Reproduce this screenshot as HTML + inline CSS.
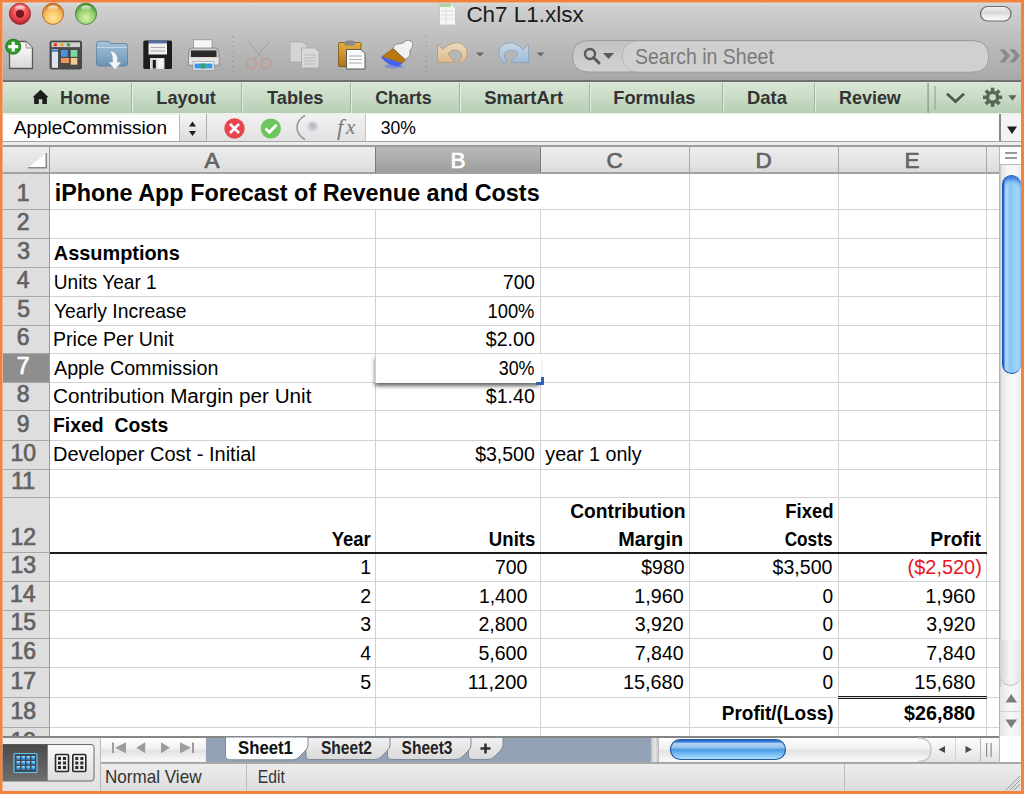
<!DOCTYPE html>
<html><head><meta charset="utf-8">
<style>
*{box-sizing:border-box}
html,body{margin:0;padding:0}
body{width:1024px;height:794px;overflow:hidden;position:relative;background:#f5813f;font-family:"Liberation Sans",sans-serif}
.a{position:absolute}
svg{position:absolute;left:0;top:0}
text{font-family:"Liberation Sans",sans-serif;white-space:pre}
</style></head><body>
<!-- window base -->
<div class="a" style="left:2px;top:2px;width:1019px;height:789px;background:#eab08e"></div>
<div class="a" style="left:3px;top:3px;width:1018px;height:788px;background:#dcdcdc"></div>
<!-- unified title/toolbar -->
<div class="a" style="left:3px;top:3px;width:1018px;height:77px;background:linear-gradient(#d8dadc 0px,#d0d0d0 3px,#c6c6c6 22px,#b9b9b9 45px,#a8a8a8 77px)"></div>
<div class="a" style="left:3px;top:80px;width:1018px;height:2px;background:#6f6f6f"></div>
<!-- ribbon -->
<div class="a" style="left:3px;top:82px;width:1018px;height:31px;background:linear-gradient(#dae7d7,#c9dcc6 50%,#b6cdb3)"></div>
<!-- formula bar -->
<div class="a" style="left:3px;top:113px;width:1018px;height:28px;background:linear-gradient(#f2f2f2,#e2e2e2)"></div>
<div class="a" style="left:3px;top:113px;width:1018px;height:3px;background:#eef0ee"></div>
<div class="a" style="left:3px;top:115px;width:176px;height:26px;background:#fff"></div>
<div class="a" style="left:179px;top:114px;width:28px;height:27px;background:linear-gradient(#f4f4f4,#dcdcdc);border-left:1px solid #b8b8b8;border-right:1px solid #b0b0b0"></div>
<div class="a" style="left:365px;top:114px;width:635px;height:27px;background:#fff;border-left:1px solid #c4c4c4"></div>
<div class="a" style="left:999px;top:114px;width:2px;height:27px;background:#8a8a8a"></div>
<div class="a" style="left:1001px;top:116px;width:20px;height:25px;background:#f3f3f3"></div>
<div class="a" style="left:3px;top:141px;width:1018px;height:1px;background:#a4a4a4"></div>
<div class="a" style="left:3px;top:142px;width:1018px;height:3px;background:#ededed"></div>
<div class="a" style="left:3px;top:145px;width:1018px;height:2px;background:#9c9c9c"></div>
<!-- column headers -->
<div class="a" style="left:3px;top:147px;width:997px;height:26px;background:linear-gradient(#ececec,#e4e4e4 60%,#d9d9d9)"></div>
<div class="a" style="left:376px;top:147px;width:164px;height:26px;background:linear-gradient(#b9b9b9,#a9a9a9 60%,#9b9b9b)"></div>
<div class="a" style="left:3px;top:172px;width:997px;height:2px;background:#a2a2a2"></div>
<!-- row headers -->
<div class="a" style="left:3px;top:174px;width:46px;height:562px;background:#dedede"></div>
<div class="a" style="left:3px;top:354px;width:46px;height:28px;background:#8e8e8e"></div>
<div class="a" style="left:49px;top:147px;width:1px;height:589px;background:#9a9a9a"></div>
<!-- grid area -->
<div class="a" style="left:50px;top:174px;width:950px;height:562px;background:#fff"></div>
<div class="a" style="left:50px;top:209px;width:950px;height:1px;background:#d2d2d2"></div>
<div class="a" style="left:50px;top:238px;width:950px;height:1px;background:#d2d2d2"></div>
<div class="a" style="left:50px;top:267px;width:950px;height:1px;background:#d2d2d2"></div>
<div class="a" style="left:50px;top:296px;width:950px;height:1px;background:#d2d2d2"></div>
<div class="a" style="left:50px;top:325px;width:950px;height:1px;background:#d2d2d2"></div>
<div class="a" style="left:50px;top:353px;width:950px;height:1px;background:#d2d2d2"></div>
<div class="a" style="left:50px;top:382px;width:950px;height:1px;background:#d2d2d2"></div>
<div class="a" style="left:50px;top:410px;width:950px;height:1px;background:#d2d2d2"></div>
<div class="a" style="left:50px;top:440px;width:950px;height:1px;background:#d2d2d2"></div>
<div class="a" style="left:50px;top:469px;width:950px;height:1px;background:#d2d2d2"></div>
<div class="a" style="left:50px;top:497px;width:950px;height:1px;background:#d2d2d2"></div>
<div class="a" style="left:50px;top:581px;width:950px;height:1px;background:#d2d2d2"></div>
<div class="a" style="left:50px;top:610px;width:950px;height:1px;background:#d2d2d2"></div>
<div class="a" style="left:50px;top:638px;width:950px;height:1px;background:#d2d2d2"></div>
<div class="a" style="left:50px;top:667px;width:950px;height:1px;background:#d2d2d2"></div>
<div class="a" style="left:50px;top:697px;width:950px;height:1px;background:#d2d2d2"></div>
<div class="a" style="left:50px;top:727px;width:950px;height:1px;background:#d2d2d2"></div>
<div class="a" style="left:3px;top:209px;width:46px;height:1px;background:#a8a8a8"></div>
<div class="a" style="left:3px;top:238px;width:46px;height:1px;background:#a8a8a8"></div>
<div class="a" style="left:3px;top:267px;width:46px;height:1px;background:#a8a8a8"></div>
<div class="a" style="left:3px;top:296px;width:46px;height:1px;background:#a8a8a8"></div>
<div class="a" style="left:3px;top:325px;width:46px;height:1px;background:#a8a8a8"></div>
<div class="a" style="left:3px;top:353px;width:46px;height:1px;background:#a8a8a8"></div>
<div class="a" style="left:3px;top:382px;width:46px;height:1px;background:#a8a8a8"></div>
<div class="a" style="left:3px;top:410px;width:46px;height:1px;background:#a8a8a8"></div>
<div class="a" style="left:3px;top:440px;width:46px;height:1px;background:#a8a8a8"></div>
<div class="a" style="left:3px;top:469px;width:46px;height:1px;background:#a8a8a8"></div>
<div class="a" style="left:3px;top:497px;width:46px;height:1px;background:#a8a8a8"></div>
<div class="a" style="left:3px;top:552px;width:46px;height:1px;background:#a8a8a8"></div>
<div class="a" style="left:3px;top:581px;width:46px;height:1px;background:#a8a8a8"></div>
<div class="a" style="left:3px;top:610px;width:46px;height:1px;background:#a8a8a8"></div>
<div class="a" style="left:3px;top:638px;width:46px;height:1px;background:#a8a8a8"></div>
<div class="a" style="left:3px;top:667px;width:46px;height:1px;background:#a8a8a8"></div>
<div class="a" style="left:3px;top:697px;width:46px;height:1px;background:#a8a8a8"></div>
<div class="a" style="left:3px;top:727px;width:46px;height:1px;background:#a8a8a8"></div>
<div class="a" style="left:375px;top:210px;width:1px;height:526px;background:#d2d2d2"></div>
<div class="a" style="left:375px;top:147px;width:1px;height:26px;background:#7a7a7a"></div>
<div class="a" style="left:540px;top:210px;width:1px;height:526px;background:#d2d2d2"></div>
<div class="a" style="left:540px;top:147px;width:1px;height:26px;background:#7a7a7a"></div>
<div class="a" style="left:689px;top:174px;width:1px;height:562px;background:#d2d2d2"></div>
<div class="a" style="left:689px;top:147px;width:1px;height:26px;background:#a8a8a8"></div>
<div class="a" style="left:838px;top:174px;width:1px;height:562px;background:#d2d2d2"></div>
<div class="a" style="left:838px;top:147px;width:1px;height:26px;background:#a8a8a8"></div>
<div class="a" style="left:986px;top:174px;width:1px;height:562px;background:#d2d2d2"></div>
<div class="a" style="left:986px;top:147px;width:1px;height:26px;background:#a8a8a8"></div>
<div class="a" style="left:50px;top:552px;width:937px;height:2px;background:#1c1c1c"></div>
<div class="a" style="left:838px;top:696px;width:149px;height:1px;background:#1c1c1c"></div>
<div class="a" style="left:838px;top:698px;width:149px;height:1px;background:#1c1c1c"></div>
<!-- selected cell -->
<div class="a" style="left:375px;top:353px;width:166px;height:30px;background:#fff;border-top:1px solid #d8d8d8;border-left:1px solid #d0d0d0;box-shadow:-1px 4px 4px -1px rgba(0,0,0,0.6)"></div>
<div class="a" style="left:536px;top:377px;width:8px;height:8px;border-right:3px solid #2f62b8;border-bottom:3px solid #2f62b8"></div>
<!-- vertical scrollbar -->
<div class="a" style="left:999px;top:147px;width:22px;height:590px;background:linear-gradient(90deg,#b4b4b4 0px,#b4b4b4 1px,#e2e2e2 2px,#f4f4f4 8px,#f8f8f8 16px,#ececec)"></div>
<div class="a" style="left:1000px;top:147px;width:21px;height:18px;background:#fff;border-bottom:1px solid #bdbdbd"></div>
<div class="a" style="left:1005px;top:152px;width:12px;height:2px;background:#9a9a9a"></div>
<div class="a" style="left:1005px;top:157px;width:12px;height:2px;background:#9a9a9a"></div>
<div class="a" style="left:1002px;top:175px;width:19px;height:199px;border-radius:10px;background:linear-gradient(90deg,#1f5fc8 0px,#2a6ed6 1px,#b4d8f6 2px,#a6d2f4 5px,#86c2f2 7px,#9ad0f6 12px,#b0dcfa 100%);border:1px solid #1a58c0;border-right:none;box-shadow:inset 0 4px 4px -1px #2a6ed6"></div>
<div class="a" style="left:1000px;top:640px;width:21px;height:46px;border-radius:0 0 11px 11px;background:linear-gradient(90deg,#d4d4d4,#f6f6f6 50%,#e4e4e4);border-bottom:1px solid #bdbdbd"></div>
<div class="a" style="left:1000px;top:687px;width:21px;height:49px;background:linear-gradient(90deg,#e4e4e4,#f8f8f8 50%,#ececec)"></div>
<div class="a" style="left:1000px;top:711px;width:21px;height:1px;background:#d4d4d4"></div>
<!-- bottom tab bar -->
<div class="a" style="left:3px;top:736px;width:1018px;height:2px;background:#858585"></div>
<div class="a" style="left:3px;top:738px;width:97px;height:53px;background:linear-gradient(#eeeeee,#e2e2e2)"></div>
<div class="a" style="left:100px;top:738px;width:1px;height:53px;background:#b9b9b9"></div>
<div class="a" style="left:101px;top:738px;width:105px;height:24px;background:linear-gradient(#f4f4f4,#e8e8e8 50%,#d9d9d9)"></div>
<div class="a" style="left:206px;top:738px;width:794px;height:24px;background:#93a3b5"></div>
<div class="a" style="left:651px;top:738px;width:349px;height:24px;background:linear-gradient(#fdfdfd,#f0f0f0 50%,#e2e2e2)"></div>
<div class="a" style="left:651px;top:738px;width:8px;height:24px;background:linear-gradient(90deg,#c4c4c4,#e8e8e8,#b8b8b8)"></div>
<div class="a" style="left:1000px;top:736px;width:21px;height:26px;background:#fff"></div>
<div class="a" style="left:101px;top:762px;width:920px;height:2px;background:#a9a9a9"></div>
<div class="a" style="left:101px;top:764px;width:920px;height:27px;background:linear-gradient(#ececec,#e4e4e4 60%,#dbdbdb)"></div>
<div class="a" style="left:246px;top:764px;width:1px;height:27px;background:#bdbdbd"></div>
<div class="a" style="left:844px;top:764px;width:1px;height:27px;background:#bdbdbd"></div>
<svg width="1024" height="794" viewBox="0 0 1024 794">
<defs><clipPath id="clipR19"><rect x="3" y="728" width="46" height="8"/></clipPath></defs>
<defs>
  <radialGradient id="gRed" cx="50%" cy="35%" r="60%">
    <stop offset="0" stop-color="#ff9a9a"/><stop offset="0.6" stop-color="#f04a50"/><stop offset="1" stop-color="#b82a30"/>
  </radialGradient>
  <radialGradient id="gOrg" cx="50%" cy="70%" r="65%">
    <stop offset="0" stop-color="#ffe89a"/><stop offset="0.6" stop-color="#f8c060"/><stop offset="1" stop-color="#d07a28"/>
  </radialGradient>
  <radialGradient id="gGrn" cx="50%" cy="70%" r="65%">
    <stop offset="0" stop-color="#d8f4a8"/><stop offset="0.6" stop-color="#96d070"/><stop offset="1" stop-color="#4a943a"/>
  </radialGradient>
  <linearGradient id="gGloss" x1="0" y1="0" x2="0" y2="1">
    <stop offset="0" stop-color="#fff" stop-opacity="0.85"/><stop offset="1" stop-color="#fff" stop-opacity="0"/>
  </linearGradient>
  <linearGradient id="gPage" x1="0" y1="0" x2="0" y2="1">
    <stop offset="0" stop-color="#ffffff"/><stop offset="1" stop-color="#d8d8d8"/>
  </linearGradient>
  <linearGradient id="gPill" x1="0" y1="0" x2="0" y2="1">
    <stop offset="0" stop-color="#f4f4f4"/><stop offset="0.45" stop-color="#d6d6d6"/><stop offset="0.6" stop-color="#e8e8e8"/><stop offset="1" stop-color="#ffffff"/>
  </linearGradient>
  <linearGradient id="gFolder" x1="0" y1="0" x2="0" y2="1">
    <stop offset="0" stop-color="#a6c4da"/><stop offset="1" stop-color="#6b93b6"/>
  </linearGradient>
  <linearGradient id="gClip" x1="0" y1="0" x2="0" y2="1">
    <stop offset="0" stop-color="#e8b040"/><stop offset="1" stop-color="#b07418"/>
  </linearGradient>
  <linearGradient id="gSearch" x1="0" y1="0" x2="0" y2="1">
    <stop offset="0" stop-color="#c2c2c2"/><stop offset="1" stop-color="#d2d2d2"/>
  </linearGradient>
  <linearGradient id="gThumbH" x1="0" y1="0" x2="0" y2="1">
    <stop offset="0" stop-color="#2060c8"/><stop offset="0.12" stop-color="#3a80e0"/><stop offset="0.2" stop-color="#b0d4f4"/><stop offset="0.38" stop-color="#9cc8f0"/><stop offset="0.52" stop-color="#4a9ae8"/><stop offset="0.8" stop-color="#84c8f6"/><stop offset="0.95" stop-color="#a8dcf8"/><stop offset="1" stop-color="#6a8cb0"/>
  </linearGradient>
  <linearGradient id="gTab" x1="0" y1="0" x2="0" y2="1">
    <stop offset="0" stop-color="#f2f2f2"/><stop offset="1" stop-color="#d9d9d9"/>
  </linearGradient>
</defs>
<!-- traffic lights -->
<circle cx="20" cy="13.8" r="10.6" fill="url(#gRed)" stroke="#8a2a2a" stroke-width="0.8"/>
<circle cx="20" cy="13.8" r="4.2" fill="#7a1a1e"/>
<ellipse cx="20" cy="8" rx="5" ry="2.6" fill="url(#gGloss)"/>
<circle cx="53" cy="13.8" r="10.6" fill="url(#gOrg)" stroke="#a85a20" stroke-width="0.8"/>
<ellipse cx="53" cy="8" rx="5" ry="2.6" fill="url(#gGloss)"/>
<circle cx="86" cy="13.8" r="10.6" fill="url(#gGrn)" stroke="#3a7a2a" stroke-width="0.8"/>
<ellipse cx="86" cy="8" rx="5" ry="2.6" fill="url(#gGloss)"/>
<!-- title doc icon -->
<path d="M439.5 3.5 H451 L455.5 8 V25 H439.5 Z" fill="#f4f6f2" stroke="#c8c8c8" stroke-width="1"/>
<rect x="440" y="4" width="11" height="3" fill="#a8d8a0"/>
<g stroke="#d8e0d8" stroke-width="0.8"><line x1="441" y1="11" x2="454" y2="11"/><line x1="441" y1="15" x2="454" y2="15"/><line x1="441" y1="19" x2="454" y2="19"/><line x1="446" y1="9" x2="446" y2="24"/></g>
<!-- pill -->
<rect x="980.5" y="6.5" width="30.5" height="14.5" rx="7.2" fill="url(#gPill)" stroke="#6a6a6a" stroke-width="1.2"/>
<!-- new doc -->
<path d="M9.5 41.5 H26 L32.5 48 V68.5 H9.5 Z" fill="url(#gPage)" stroke="#5a5a5a" stroke-width="1.3"/>
<path d="M26 41.5 V48 H32.5" fill="#e8e8e8" stroke="#9a9a9a" stroke-width="1"/>
<circle cx="13.2" cy="46.7" r="7.6" fill="#2f9a2a" stroke="#1e6e1a" stroke-width="0.8"/>
<path d="M11.6 41.8 h3.2 v3.3 h3.3 v3.2 h-3.3 v3.3 h-3.2 v-3.3 h-3.3 v-3.2 h3.3 z" fill="#fff"/>
<!-- gallery -->
<rect x="50" y="41" width="31.5" height="28" rx="1.5" fill="#4a4a4a" stroke="#3a3a3a" stroke-width="0.8"/>
<rect x="51.5" y="42.3" width="28.5" height="4.8" fill="#cfcfcf"/>
<circle cx="55.4" cy="44.7" r="1.8" fill="#e03a1a"/><circle cx="62" cy="44.7" r="1.8" fill="#f0a020"/><circle cx="68.5" cy="44.7" r="1.8" fill="#3aa52a"/>
<rect x="51.8" y="49" width="6.2" height="18.8" fill="#dde4ee"/>
<rect x="51.8" y="49.5" width="6.2" height="2.2" fill="#3a78d8"/>
<rect x="61" y="50" width="6.7" height="6.8" fill="#4a90e8"/>
<rect x="70.7" y="50" width="6.6" height="6.8" fill="#7ed8a8"/>
<rect x="61" y="58" width="8" height="5" fill="#f0955a"/>
<rect x="70.7" y="58" width="6.6" height="6.7" fill="#f4c890"/>
<!-- open folder -->
<path d="M96.5 44 Q96.5 41.3 99 41.3 H108 Q110 41.3 110.6 43.5 H125 Q127.5 43.5 127.5 46 V64 Q127.5 66 125 66 H99 Q96.5 66 96.5 64 Z" fill="url(#gFolder)" stroke="#5a7f9c" stroke-width="0.8"/>
<path d="M96.8 47.5 H127.2" stroke="#c0d6e6" stroke-width="1"/>
<path d="M109.5 50.5 Q119 52 117.5 62 L121.5 62 L115 70 L108.5 62 L112.5 62 Q113 55 109.5 50.5 Z" fill="#f4f4f4" stroke="#8a9aa8" stroke-width="0.6"/>
<!-- save floppy -->
<rect x="143.3" y="40.5" width="28.7" height="28.5" rx="1.5" fill="#1e1e1e"/>
<rect x="148.5" y="40.8" width="18.5" height="2.5" fill="#4a6fae"/>
<rect x="148.5" y="43.3" width="18.5" height="11.2" fill="#f0f0f0"/>
<g stroke="#a8a8a8" stroke-width="1"><line x1="150.5" y1="47.5" x2="165" y2="47.5"/><line x1="150.5" y1="51" x2="165" y2="51"/></g>
<rect x="150" y="58" width="14.5" height="11" fill="#d8d8d8"/>
<rect x="152.8" y="60" width="3" height="8.5" fill="#1a1a1a"/>
<rect x="157.5" y="59" width="6" height="9.5" fill="#f4f4f4"/>
<!-- printer -->
<rect x="193.5" y="39.8" width="18.5" height="9" fill="#f6f6f6" stroke="#8a8a8a" stroke-width="0.7"/>
<path d="M188.5 52 Q188.5 48 192 48 H215 Q219 48 219 52 V65 H188.5 Z" fill="#c8c8c8" stroke="#7a7a7a" stroke-width="0.7"/>
<rect x="191" y="50.5" width="25.5" height="6.5" fill="#2a2a2a"/>
<rect x="189" y="57.5" width="29.5" height="7" fill="#e6e6e6"/>
<rect x="193" y="61.5" width="21" height="8.5" fill="#fafafa" stroke="#8a8a8a" stroke-width="0.6"/>
<rect x="194.5" y="63.5" width="18" height="5" fill="#3a9ad8"/>
<rect x="201" y="63.5" width="4" height="5" fill="#3aa060"/>
<!-- separators dotted -->
<g fill="#8e8e8e"><circle cx="233" cy="37" r="0.6"/></g>
<line x1="233" y1="36" x2="233" y2="76" stroke="#8a8a8a" stroke-width="1" stroke-dasharray="1 4"/>
<line x1="426.3" y1="36" x2="426.3" y2="76" stroke="#8a8a8a" stroke-width="1" stroke-dasharray="1 4"/>
<!-- scissors (disabled) -->
<g opacity="0.75">
<line x1="248" y1="41" x2="264" y2="60" stroke="#9a9a9a" stroke-width="1"/>
<line x1="270" y1="41" x2="254" y2="60" stroke="#9a9a9a" stroke-width="1"/>
<circle cx="251.5" cy="63.5" r="5" fill="none" stroke="#c09a8a" stroke-width="2"/>
<circle cx="266" cy="63.5" r="5" fill="none" stroke="#c09a8a" stroke-width="2"/>
</g>
<!-- copy (disabled) -->
<g opacity="0.8">
<path d="M290 42 H303 L307 46 V62 H290 Z" fill="#dcdcdc" stroke="#a6a6a6" stroke-width="0.8"/>
<path d="M301.5 48 H315 L319 52 V68 H301.5 Z" fill="#e2e2e2" stroke="#a6a6a6" stroke-width="0.8"/>
<g stroke="#b8b8b8" stroke-width="0.8"><line x1="304" y1="55" x2="316" y2="55"/><line x1="304" y1="58" x2="316" y2="58"/><line x1="304" y1="61" x2="316" y2="61"/><line x1="304" y1="64" x2="316" y2="64"/></g>
</g>
<!-- paste -->
<rect x="338.5" y="42.5" width="22.5" height="24" rx="1" fill="url(#gClip)" stroke="#7a5210" stroke-width="0.8"/>
<path d="M344.5 43.5 Q344.5 40.5 347.5 40.5 H352 Q355 40.5 355 43.5 V45.5 H344.5 Z" fill="#8a8a8a"/>
<path d="M346.5 49.5 H361 L365 53.5 V69 H346.5 Z" fill="#fbfbfb" stroke="#5a5a5a" stroke-width="1"/>
<g stroke="#9a9a9a" stroke-width="0.8"><line x1="349" y1="56" x2="362" y2="56"/><line x1="349" y1="59.5" x2="362" y2="59.5"/><line x1="349" y1="63" x2="362" y2="63"/></g>
<!-- format brush -->
<defs>
<linearGradient id="gUndo" x1="0" y1="0" x2="0" y2="1"><stop offset="0" stop-color="#eadcc0"/><stop offset="1" stop-color="#dfb888"/></linearGradient>
<linearGradient id="gRedo" x1="0" y1="0" x2="0" y2="1"><stop offset="0" stop-color="#c8d8e6"/><stop offset="1" stop-color="#9cbcd8"/></linearGradient>
</defs>
<ellipse cx="394" cy="66.3" rx="9.5" ry="2.2" fill="#5a70f0" opacity="0.55"/>
<path d="M393 48.5 L395 44.5 L403 43 L406 40.5 Q411 39.5 412.8 43 Q413.5 47 410 50.5 L409.8 56 L405.2 59.7 Z" fill="#f2f2f2" stroke="#7a7a7a" stroke-width="0.8"/>
<path d="M393 48.5 L405.2 59.7 L402.2 63.2 L382 56.7 Z" fill="#b8780e" stroke="#7a4a08" stroke-width="0.5"/>
<path d="M381.5 56.5 L402.2 63.2 Q400 66.5 397 66.5 Q388 65.5 381.5 58 Z" fill="#4462f0"/>
<!-- undo / redo -->
<path d="M437.5 44.3 L442.8 49.5 Q450 42.5 457 42.7 Q466 43.5 467.3 52 Q467.5 59 461.3 63.4 Q459.5 62 459.5 61 Q462.5 57 461.5 54 Q459.5 50 454 50.1 Q449.5 50.5 448 54 L455 62.2 H437.5 Z" fill="url(#gUndo)" stroke="#b49c7c" stroke-width="0.9"/>
<path d="M476 52.5 H484 L480 56.5 Z" fill="#6a6a6a"/>
<g transform="translate(966.1 0) scale(-1 1)">
<path d="M437.5 44.3 L442.8 49.5 Q450 42.5 457 42.7 Q466 43.5 467.3 52 Q467.5 59 461.3 63.4 Q459.5 62 459.5 61 Q462.5 57 461.5 54 Q459.5 50 454 50.1 Q449.5 50.5 448 54 L455 62.2 H437.5 Z" fill="url(#gRedo)" stroke="#8aa2bc" stroke-width="0.9"/>
</g>
<path d="M536.5 52.5 H544.5 L540.5 56.5 Z" fill="#6a6a6a"/>
<!-- search -->
<path d="M588.5 40.5 H972 Q988.5 40.5 988.5 56.25 Q988.5 72 972 72 H588.5 Q572.5 72 572.5 56.25 Q572.5 40.5 588.5 40.5 Z" fill="url(#gSearch)" stroke="#9a9a9a" stroke-width="1"/>
<path d="M639 41 Q622.5 41 622.5 56.25 Q622.5 71.5 639 71.5" fill="none" stroke="#b0b0b0" stroke-width="1"/>
<path d="M639 41.5 H972 Q988 41.5 988 56.25 Q988 71.5 972 71.5 H639 Q623 71.5 623 56.25 Q623 41.5 639 41.5 Z" fill="#d0d0d0"/>
<circle cx="590" cy="54" r="5" fill="none" stroke="#5a5a5a" stroke-width="2.4"/>
<line x1="593.5" y1="57.5" x2="599" y2="63" stroke="#5a5a5a" stroke-width="3" stroke-linecap="round"/>
<path d="M603 53 H614 L608.5 59 Z" fill="#5a5a5a"/>
<!-- chevrons >> -->
<path d="M999.5 49.3 L1004.5 49.3 L1010 55.8 L1004.5 62.4 L999.5 62.4 L1005 55.8 Z" fill="#8a8a8a"/>
<path d="M1009.5 49.3 L1014.5 49.3 L1020 55.8 L1014.5 62.4 L1009.5 62.4 L1015 55.8 Z" fill="#8a8a8a"/>
<!-- ribbon separators -->
<g>
<rect x="131" y="83" width="1" height="30" fill="#9fb89c"/><rect x="132" y="83" width="1" height="30" fill="#e2eee0"/>
<rect x="241" y="83" width="1" height="30" fill="#9fb89c"/><rect x="242" y="83" width="1" height="30" fill="#e2eee0"/>
<rect x="350" y="83" width="1" height="30" fill="#9fb89c"/><rect x="351" y="83" width="1" height="30" fill="#e2eee0"/>
<rect x="459" y="83" width="1" height="30" fill="#9fb89c"/><rect x="460" y="83" width="1" height="30" fill="#e2eee0"/>
<rect x="589" y="83" width="1" height="30" fill="#9fb89c"/><rect x="590" y="83" width="1" height="30" fill="#e2eee0"/>
<rect x="722" y="83" width="1" height="30" fill="#9fb89c"/><rect x="723" y="83" width="1" height="30" fill="#e2eee0"/>
<rect x="814" y="83" width="1" height="30" fill="#9fb89c"/><rect x="815" y="83" width="1" height="30" fill="#e2eee0"/>
<rect x="927.5" y="83" width="1.2" height="30" fill="#7f977c"/>
<rect x="934.5" y="86" width="1.2" height="24" fill="#93aa90"/>
</g>
<!-- house -->
<path d="M40.6 89.8 L32.6 97.3 H34.1 V104 H38.8 V99.3 H42.3 V104 H46.9 V97.3 H48.5 Z" fill="#1e1e1e"/>
<!-- chevron -->
<path d="M947 93.7 L955.5 101.6 L964 93.7" fill="none" stroke="#4e5c4e" stroke-width="2.8"/>
<!-- gear -->
<g transform="translate(992.6 97.3)" fill="#5a665a">
<circle r="6.6"/>
<rect x="-1.8" y="-9.6" width="3.6" height="19.2"/>
<rect x="-9.6" y="-1.8" width="19.2" height="3.6"/>
<rect x="-1.8" y="-9.6" width="3.6" height="19.2" transform="rotate(45)"/>
<rect x="-9.6" y="-1.8" width="19.2" height="3.6" transform="rotate(45)"/>
<circle r="3.3" fill="#c8dbc5"/>
</g>
<path d="M1008.4 95.2 H1016.5 L1012.45 100.8 Z" fill="#5a665a"/>
<!-- formula bar icons -->
<path d="M189 126.6 L192.5 121.6 L196 126.6 Z" fill="#1e1e1e"/>
<path d="M189 131 L192.5 136 L196 131 Z" fill="#1e1e1e"/>
<circle cx="234.5" cy="128.5" r="10.2" fill="#e8464c"/>
<path d="M230 124 L239 133 M239 124 L230 133" stroke="#fff" stroke-width="2.6"/>
<circle cx="270.8" cy="128.5" r="10.1" fill="#6cc65c"/>
<path d="M265.5 128.5 L269.5 132.3 L276.5 124.8" fill="none" stroke="#fff" stroke-width="2.8"/>
<path d="M305 115.5 Q297 120 297 127.5 Q297 135 305 139.5" fill="none" stroke="#9a9a9a" stroke-width="1.6"/>
<defs><radialGradient id="gDot" cx="50%" cy="35%" r="60%"><stop offset="0" stop-color="#aeb2ba"/><stop offset="1" stop-color="#e8e8ee"/></radialGradient></defs>
<circle cx="312.7" cy="127.5" r="6" fill="url(#gDot)"/>
<text x="337" y="135" style="font-family:'Liberation Serif',serif;font-style:italic;font-size:23px" fill="#7a7a7a">f</text>
<text x="346" y="134" style="font-family:'Liberation Serif',serif;font-style:italic;font-size:21px" fill="#7a7a7a">x</text>
<path d="M1007 126.5 H1017 L1012 134 Z" fill="#222"/>
<!-- header corner -->
<path d="M28.2 167.7 L46.3 153.1 V167.7 Z" fill="#fff"/>
<path d="M46.3 153.1 V167.7 H28.2" fill="none" stroke="#8a8a8a" stroke-width="1.6"/>
<!-- vertical scroll arrows -->
<path d="M1005.5 702.5 L1011.2 694 L1017 702.5 Z" fill="#7c7c7c"/>
<path d="M1005.5 719.5 L1011.2 728 L1017 719.5 Z" fill="#7c7c7c"/>
<!-- view buttons -->
<defs>
<linearGradient id="gDark" x1="0" y1="0" x2="0" y2="1"><stop offset="0" stop-color="#4a4a4a"/><stop offset="0.5" stop-color="#5c5c5c"/><stop offset="1" stop-color="#6e6e6e"/></linearGradient>
<linearGradient id="gLight" x1="0" y1="0" x2="0" y2="1"><stop offset="0" stop-color="#fafafa"/><stop offset="1" stop-color="#dcdcdc"/></linearGradient>
<linearGradient id="gBlueIc" x1="0" y1="0" x2="0" y2="1"><stop offset="0" stop-color="#a8dcf8"/><stop offset="0.5" stop-color="#5ab4ee"/><stop offset="0.52" stop-color="#2a8ee0"/><stop offset="1" stop-color="#40a8f0"/></linearGradient>
<linearGradient id="gNav" x1="0" y1="0" x2="0" y2="1"><stop offset="0" stop-color="#ffffff"/><stop offset="0.45" stop-color="#f0f0f0"/><stop offset="0.55" stop-color="#e2e2e2"/><stop offset="1" stop-color="#fbfbfb"/></linearGradient>
</defs>
<path d="M3 744.5 H91 Q94 744.5 94 747.5 V778 Q94 781 91 781 H3 Z" fill="url(#gLight)" stroke="#6a6a6a" stroke-width="1"/>
<path d="M3 744.5 H47.7 V781 H3 Z" fill="url(#gDark)"/>
<rect x="14" y="753.5" width="23" height="19" rx="1" fill="#3a4a58" stroke="#6ac0f0" stroke-width="1.2"/>
<g fill="url(#gBlueIc)">
<rect x="16.5" y="756" width="3.5" height="3.5"/><rect x="21.5" y="756" width="3.5" height="3.5"/><rect x="26.5" y="756" width="3.5" height="3.5"/><rect x="31.5" y="756" width="3.5" height="3.5"/>
<rect x="16.5" y="761" width="3.5" height="3.5"/><rect x="21.5" y="761" width="3.5" height="3.5"/><rect x="26.5" y="761" width="3.5" height="3.5"/><rect x="31.5" y="761" width="3.5" height="3.5"/>
<rect x="16.5" y="766" width="3.5" height="3.5"/><rect x="21.5" y="766" width="3.5" height="3.5"/><rect x="26.5" y="766" width="3.5" height="3.5"/><rect x="31.5" y="766" width="3.5" height="3.5"/>
</g>
<g fill="none" stroke="#2a2a2a" stroke-width="1.6">
<rect x="55.5" y="754.5" width="13" height="17" rx="1"/><rect x="72.8" y="754.5" width="13" height="17" rx="1"/>
</g>
<g fill="#2a2a2a">
<rect x="58" y="757" width="3" height="3"/><rect x="63" y="757" width="3" height="3"/><rect x="58" y="761.5" width="3" height="3"/><rect x="63" y="761.5" width="3" height="3"/><rect x="58" y="766" width="3" height="3"/><rect x="63" y="766" width="3" height="3"/>
<rect x="75.3" y="757" width="3" height="3"/><rect x="80.3" y="757" width="3" height="3"/><rect x="75.3" y="761.5" width="3" height="3"/><rect x="80.3" y="761.5" width="3" height="3"/><rect x="75.3" y="766" width="3" height="3"/><rect x="80.3" y="766" width="3" height="3"/>
</g>
<!-- nav -->
<rect x="101" y="738" width="104.5" height="23.5" fill="url(#gNav)"/>
<g fill="#9c9c9c">
<rect x="112" y="742.5" width="2" height="10.5"/><path d="M115 747.8 L126 742.3 V753.3 Z"/>
<path d="M136.3 747.8 L145.2 742.3 V753.3 Z"/>
<path d="M170 747.8 L161 742.3 V753.3 Z"/>
<path d="M191 747.8 L180 742.3 V753.3 Z"/><rect x="192" y="742.5" width="2" height="10.5"/>
</g>
<!-- tabs -->
<path d="M468.5 737.5 H503 V745 Q503 748 500 751 L494 757 Q491.5 759.5 488 759.5 H472 Q468.5 759.5 468.5 756 Z" fill="url(#gTab)" stroke="#7e8a96" stroke-width="1"/>
<path d="M480.5 748.5 H490.5 M485.5 743.5 V753.5" stroke="#333" stroke-width="2.6"/>
<path d="M387.5 737.5 H471 V745 Q471 748 468 751 L462 757 Q459.5 759.5 456 759.5 H391 Q387.5 759.5 387.5 756 Z" fill="url(#gTab)" stroke="#7e8a96" stroke-width="1"/>
<path d="M306 737.5 H390 V745 Q390 748 387 751 L381 757 Q378.5 759.5 375 759.5 H309.5 Q306 759.5 306 756 Z" fill="url(#gTab)" stroke="#7e8a96" stroke-width="1"/>
<path d="M225.5 737 H308 V745 Q308 748 305 751 L299 757 Q296.5 759.8 293 759.8 H229 Q225.5 759.8 225.5 756 Z" fill="#fdfdfd" stroke="#7e8a96" stroke-width="1"/>
<!-- horizontal scrollbar -->
<path d="M659 738 H918 Q931 738 931 749.75 Q931 761.5 918 761.5 H659 Z" fill="url(#gNav)"/>
<path d="M918 738 Q931 738 931 749.75 Q931 761.5 918 761.5" fill="none" stroke="#c8c8c8" stroke-width="1.5"/>
<rect x="670.5" y="739.5" width="115" height="20" rx="10" fill="url(#gThumbH)" stroke="#2a5aa0" stroke-width="1.2"/>
<line x1="955.5" y1="738" x2="955.5" y2="761.5" stroke="#d4d4d4" stroke-width="1"/>
<line x1="980.5" y1="738" x2="980.5" y2="761.5" stroke="#b8b8b8" stroke-width="1"/>
<path d="M938.5 749.5 L945 746 V753 Z" fill="#4a4a4a"/>
<path d="M972 749.5 L965.5 746 V753 Z" fill="#4a4a4a"/>
<rect x="986" y="743" width="1.2" height="14" fill="#8a8a8a"/><rect x="990.5" y="743" width="1.2" height="14" fill="#8a8a8a"/>
<rect x="999" y="736" width="1" height="27" fill="#b8b8b8"/>
<!-- resize grip -->
<g stroke="#9a9a9a" stroke-width="1"><line x1="1006" y1="790" x2="1020" y2="776"/><line x1="1010" y1="790" x2="1020" y2="780"/><line x1="1014" y1="790" x2="1020" y2="784"/></g>

<g><text transform="translate(54.64 200.50) scale(0.9550 1)" font-size="24.5" font-weight="bold" fill="#000">iPhone App Forecast of Revenue and Costs</text></g>
<g><text transform="translate(53.80 260.30) scale(0.9956 1)" font-size="20.0" font-weight="bold" fill="#000">Assumptions</text></g>
<g><text transform="translate(53.85 288.80) scale(0.9543 1)" font-size="20.0" fill="#000">Units Year 1</text></g>
<g><text transform="translate(54.00 317.80) scale(0.9672 1)" font-size="20.0" fill="#000">Yearly Increase</text></g>
<g><text transform="translate(53.02 346.00) scale(0.9787 1)" font-size="20.0" fill="#000">Price Per Unit</text></g>
<g><text transform="translate(54.00 374.50) scale(0.9861 1)" font-size="20.0" fill="#000">Apple Commission</text></g>
<g><text transform="translate(52.97 403.00) scale(1.0338 1)" font-size="20.0" fill="#000">Contribution Margin per Unit</text></g>
<g><text transform="translate(53.03 432.00) scale(0.9703 1)" font-size="20.0" font-weight="bold" fill="#000">Fixed  Costs</text></g>
<g><text transform="translate(53.00 460.80) scale(1.0027 1)" font-size="20.0" fill="#000">Developer Cost - Initial</text></g>
<g><text transform="translate(503.05 288.80) scale(0.9521 1)" font-size="20.0" fill="#000">700</text></g>
<g><text transform="translate(487.48 317.80) scale(0.9192 1)" font-size="20.0" fill="#000">100%</text></g>
<g><text transform="translate(485.80 346.00) scale(0.9795 1)" font-size="20.0" fill="#000">$2.00</text></g>
<g><text transform="translate(498.70 374.50) scale(0.8945 1)" font-size="20.0" fill="#000">30%</text></g>
<g><text transform="translate(485.80 403.00) scale(0.9795 1)" font-size="20.0" fill="#000">$1.40</text></g>
<g><text transform="translate(475.20 460.80) scale(0.9746 1)" font-size="20.0" fill="#000">$3,500</text></g>
<g><text transform="translate(545.30 460.80) scale(0.9843 1)" font-size="20.0" fill="#000">year 1 only</text></g>
<g><text transform="translate(331.70 546.00) scale(0.9251 1)" font-size="20.0" font-weight="bold" fill="#000">Year</text></g>
<g><text transform="translate(488.87 546.00) scale(0.9289 1)" font-size="20.0" font-weight="bold" fill="#000">Units</text></g>
<g><text transform="translate(570.20 517.80) scale(0.9626 1)" font-size="20.0" font-weight="bold" fill="#000">Contribution</text></g>
<g><text transform="translate(618.21 546.00) scale(0.9915 1)" font-size="20.0" font-weight="bold" fill="#000">Margin</text></g>
<g><text transform="translate(785.28 517.80) scale(0.9236 1)" font-size="20.0" font-weight="bold" fill="#000">Fixed</text></g>
<g><text transform="translate(784.70 546.00) scale(0.8603 1)" font-size="20.0" font-weight="bold" fill="#000">Costs</text></g>
<g><text transform="translate(930.33 546.00) scale(0.9679 1)" font-size="20.0" font-weight="bold" fill="#000">Profit</text></g>
<g><text transform="translate(360.23 573.80) scale(0.9787 1)" font-size="20.0" fill="#000">1</text></g>
<g><text transform="translate(494.93 573.80) scale(0.9738 1)" font-size="20.0" fill="#000">700</text></g>
<g><text transform="translate(641.30 573.80) scale(0.9736 1)" font-size="20.0" fill="#000">$980</text></g>
<g><text transform="translate(772.60 573.80) scale(0.9795 1)" font-size="20.0" fill="#000">$3,500</text></g>
<g><text transform="translate(907.60 573.80) scale(0.9968 1)" font-size="20.0" fill="#e8141c">($2,520)</text></g>
<g><text transform="translate(360.23 602.50) scale(0.9787 1)" font-size="20.0" fill="#000">2</text></g>
<g><text transform="translate(478.93 602.50) scale(0.9688 1)" font-size="20.0" fill="#000">1,400</text></g>
<g><text transform="translate(634.21 602.50) scale(0.9893 1)" font-size="20.0" fill="#000">1,960</text></g>
<g><text transform="translate(822.50 602.50) scale(0.9545 1)" font-size="20.0" fill="#000">0</text></g>
<g><text transform="translate(925.20 602.50) scale(1.0015 1)" font-size="20.0" fill="#000">1,960</text></g>
<g><text transform="translate(360.23 631.20) scale(0.9787 1)" font-size="20.0" fill="#000">3</text></g>
<g><text transform="translate(478.44 631.20) scale(0.9787 1)" font-size="20.0" fill="#000">2,800</text></g>
<g><text transform="translate(634.74 631.20) scale(0.9787 1)" font-size="20.0" fill="#000">3,920</text></g>
<g><text transform="translate(822.50 631.20) scale(0.9545 1)" font-size="20.0" fill="#000">0</text></g>
<g><text transform="translate(926.34 631.20) scale(0.9787 1)" font-size="20.0" fill="#000">3,920</text></g>
<g><text transform="translate(360.23 659.80) scale(0.9787 1)" font-size="20.0" fill="#000">4</text></g>
<g><text transform="translate(478.44 659.80) scale(0.9787 1)" font-size="20.0" fill="#000">5,600</text></g>
<g><text transform="translate(634.74 659.80) scale(0.9787 1)" font-size="20.0" fill="#000">7,840</text></g>
<g><text transform="translate(822.50 659.80) scale(0.9545 1)" font-size="20.0" fill="#000">0</text></g>
<g><text transform="translate(926.34 659.80) scale(0.9787 1)" font-size="20.0" fill="#000">7,840</text></g>
<g><text transform="translate(360.23 688.80) scale(0.9787 1)" font-size="20.0" fill="#000">5</text></g>
<g><text transform="translate(467.70 688.80) scale(1.0006 1)" font-size="20.0" fill="#000">11,200</text></g>
<g><text transform="translate(623.01 688.80) scale(0.9925 1)" font-size="20.0" fill="#000">15,680</text></g>
<g><text transform="translate(822.50 688.80) scale(0.9545 1)" font-size="20.0" fill="#000">0</text></g>
<g><text transform="translate(914.30 688.80) scale(0.9975 1)" font-size="20.0" fill="#000">15,680</text></g>
<g><text transform="translate(721.75 719.80) scale(0.9499 1)" font-size="20.0" font-weight="bold" fill="#000">Profit/(Loss)</text></g>
<g><text transform="translate(904.10 719.80) scale(0.9851 1)" font-size="20.0" font-weight="bold" fill="#000">$26,880</text></g>
<g><text transform="translate(466.40 21.60) scale(0.9983 1)" font-size="22.5" fill="#1a1a1a">Ch7 L1.xlsx</text></g>
<g><text transform="translate(635.00 64.40) scale(0.9084 1)" font-size="21.5" fill="#7a7a7a">Search in Sheet</text></g>
<g><text transform="translate(59.97 103.80) scale(1.0274 1)" font-size="17.5" font-weight="bold" fill="#333">Home</text></g>
<g><text transform="translate(156.36 103.80) scale(1.0365 1)" font-size="17.5" font-weight="bold" fill="#333">Layout</text></g>
<g><text transform="translate(266.90 103.80) scale(1.0458 1)" font-size="17.5" font-weight="bold" fill="#333">Tables</text></g>
<g><text transform="translate(375.20 103.80) scale(1.0198 1)" font-size="17.5" font-weight="bold" fill="#333">Charts</text></g>
<g><text transform="translate(484.20 103.80) scale(1.0539 1)" font-size="17.5" font-weight="bold" fill="#333">SmartArt</text></g>
<g><text transform="translate(613.26 103.80) scale(1.0444 1)" font-size="17.5" font-weight="bold" fill="#333">Formulas</text></g>
<g><text transform="translate(746.95 103.80) scale(1.0538 1)" font-size="17.5" font-weight="bold" fill="#333">Data</text></g>
<g><text transform="translate(838.97 103.80) scale(1.0268 1)" font-size="17.5" font-weight="bold" fill="#333">Review</text></g>
<g><text transform="translate(13.70 133.90) scale(1.0573 1)" font-size="18.0" fill="#000">AppleCommission</text></g>
<g><text transform="translate(380.80 134.00) scale(0.9772 1)" font-size="18.0" fill="#000">30%</text></g>
<g><text transform="translate(204.40 167.60) scale(1.0000 1)" font-size="22.5" stroke="#646464" stroke-width="0.700" fill="#646464">A</text></g>
<g><text transform="translate(450.50 167.60) scale(1.0000 1)" font-size="22.5" stroke="#fff" stroke-width="0.700" fill="#fff">B</text></g>
<g><text transform="translate(606.50 167.60) scale(1.0000 1)" font-size="22.5" stroke="#646464" stroke-width="0.700" fill="#646464">C</text></g>
<g><text transform="translate(755.50 167.60) scale(1.0000 1)" font-size="22.5" stroke="#646464" stroke-width="0.700" fill="#646464">D</text></g>
<g><text transform="translate(904.50 167.60) scale(1.0000 1)" font-size="22.5" stroke="#646464" stroke-width="0.700" fill="#646464">E</text></g>
<g><text transform="translate(16.80 200.70) scale(1.0000 1)" font-size="23.0" stroke="#626262" stroke-width="0.700" fill="#626262">1</text></g>
<g><text transform="translate(16.80 229.70) scale(1.0000 1)" font-size="23.0" stroke="#626262" stroke-width="0.700" fill="#626262">2</text></g>
<g><text transform="translate(17.30 258.70) scale(1.0000 1)" font-size="23.0" stroke="#626262" stroke-width="0.700" fill="#626262">3</text></g>
<g><text transform="translate(16.80 287.70) scale(1.0000 1)" font-size="23.0" stroke="#626262" stroke-width="0.700" fill="#626262">4</text></g>
<g><text transform="translate(17.30 316.70) scale(1.0000 1)" font-size="23.0" stroke="#626262" stroke-width="0.700" fill="#626262">5</text></g>
<g><text transform="translate(16.80 344.70) scale(1.0000 1)" font-size="23.0" stroke="#626262" stroke-width="0.700" fill="#626262">6</text></g>
<g><text transform="translate(16.80 373.70) scale(1.0000 1)" font-size="23.0" stroke="#fff" stroke-width="0.700" fill="#fff">7</text></g>
<g><text transform="translate(16.80 401.70) scale(1.0000 1)" font-size="23.0" stroke="#626262" stroke-width="0.700" fill="#626262">8</text></g>
<g><text transform="translate(16.80 431.70) scale(1.0000 1)" font-size="23.0" stroke="#626262" stroke-width="0.700" fill="#626262">9</text></g>
<g><text transform="translate(10.40 460.70) scale(1.0000 1)" font-size="23.0" stroke="#626262" stroke-width="0.700" fill="#626262">10</text></g>
<g><text transform="translate(11.26 488.70) scale(1.0000 1)" font-size="23.0" stroke="#626262" stroke-width="0.700" fill="#626262">11</text></g>
<g><text transform="translate(10.40 544.70) scale(1.0000 1)" font-size="23.0" stroke="#626262" stroke-width="0.700" fill="#626262">12</text></g>
<g><text transform="translate(10.40 572.70) scale(1.0000 1)" font-size="23.0" stroke="#626262" stroke-width="0.700" fill="#626262">13</text></g>
<g><text transform="translate(9.90 601.70) scale(1.0000 1)" font-size="23.0" stroke="#626262" stroke-width="0.700" fill="#626262">14</text></g>
<g><text transform="translate(10.40 629.70) scale(1.0000 1)" font-size="23.0" stroke="#626262" stroke-width="0.700" fill="#626262">15</text></g>
<g><text transform="translate(10.40 658.70) scale(1.0000 1)" font-size="23.0" stroke="#626262" stroke-width="0.700" fill="#626262">16</text></g>
<g><text transform="translate(10.40 688.70) scale(1.0000 1)" font-size="23.0" stroke="#626262" stroke-width="0.700" fill="#626262">17</text></g>
<g><text transform="translate(10.40 718.70) scale(1.0000 1)" font-size="23.0" stroke="#626262" stroke-width="0.700" fill="#626262">18</text></g>
<g clip-path="url(#clipR19)"><text transform="translate(10.40 749.00) scale(1.0000 1)" font-size="23.0" stroke="#626262" stroke-width="0.700" fill="#626262">19</text></g>
<g><text transform="translate(238.00 753.80) scale(0.9319 1)" font-size="18.0" font-weight="bold" fill="#111">Sheet1</text></g>
<g><text transform="translate(321.00 753.80) scale(0.8642 1)" font-size="18.0" font-weight="bold" fill="#222">Sheet2</text></g>
<g><text transform="translate(401.60 753.80) scale(0.8625 1)" font-size="18.0" font-weight="bold" fill="#222">Sheet3</text></g>
<g><text transform="translate(105.02 783.00) scale(0.9762 1)" font-size="17.5" fill="#333">Normal View</text></g>
<g><text transform="translate(257.85 783.00) scale(0.8961 1)" font-size="17.5" fill="#333">Edit</text></g>
</svg>
</body></html>
